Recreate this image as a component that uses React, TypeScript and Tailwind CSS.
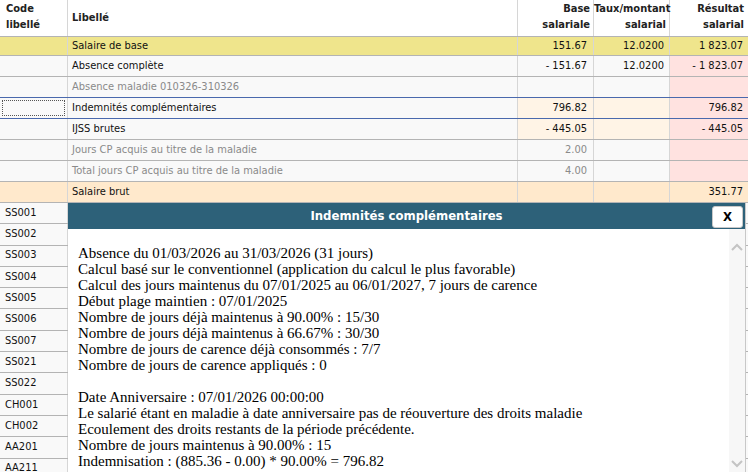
import React from "react";

type Row = {
  label: string;
  base?: string;
  taux?: string;
  result?: string;
  muted?: boolean;
  rowBg?: string;
  baseBg?: string;
  tauxBg?: string;
  resultBg?: string;
  focus?: boolean;
};

const rows: Row[] = [
  { label: "Salaire de base", base: "151.67", taux: "12.0200", result: "1 823.07", rowBg: "bg-[#efe58c]" },
  { label: "Absence complète", base: "- 151.67", taux: "12.0200", result: "- 1 823.07", resultBg: "bg-[#ffe2e0]" },
  { label: "Absence maladie 010326-310326", muted: true, resultBg: "bg-[#ffe2e0]" },
  {
    label: "Indemnités complémentaires",
    base: "796.82",
    result: "796.82",
    baseBg: "bg-[#fff4e6]",
    tauxBg: "bg-[#fff4e6]",
    resultBg: "bg-[#ffe2e0]",
    focus: true,
  },
  {
    label: "IJSS brutes",
    base: "- 445.05",
    result: "- 445.05",
    baseBg: "bg-[#fff4e6]",
    tauxBg: "bg-[#fff4e6]",
    resultBg: "bg-[#ffe2e0]",
  },
  { label: "Jours CP acquis au titre de la maladie", base: "2.00", muted: true, resultBg: "bg-[#ffe2e0]" },
  { label: "Total jours CP acquis au titre de la maladie", base: "4.00", muted: true, resultBg: "bg-[#ffe2e0]" },
  { label: "Salaire brut", result: "351.77", rowBg: "bg-[#ffe9cc]" },
];

const codes = ["SS001", "SS002", "SS003", "SS004", "SS005", "SS006", "SS007", "SS021", "SS022", "CH001", "CH002", "AA201", "AA211"];

const detail = [
  "Absence du 01/03/2026 au 31/03/2026 (31 jours)",
  "Calcul basé sur le conventionnel (application du calcul le plus favorable)",
  "Calcul des jours maintenus du 07/01/2025 au 06/01/2027, 7 jours de carence",
  "Début plage maintien : 07/01/2025",
  "Nombre de jours déjà maintenus à 90.00% : 15/30",
  "Nombre de jours déjà maintenus à 66.67% : 30/30",
  "Nombre de jours de carence déjà consommés : 7/7",
  "Nombre de jours de carence appliqués : 0",
  "",
  "Date Anniversaire : 07/01/2026 00:00:00",
  "Le salarié étant en maladie à date anniversaire pas de réouverture des droits maladie",
  "Ecoulement des droits restants de la période précédente.",
  "Nombre de jours maintenus à 90.00% : 15",
  "Indemnisation : (885.36 - 0.00) * 90.00% = 796.82",
];

const grid = "grid grid-cols-[68px_450px_76px_76px_78px]";

export default function App() {
  return (
    <div
      className="relative w-[748px] h-[472px] overflow-hidden bg-white text-[11px] text-[#111]"
      style={{ fontFamily: "Tahoma, 'DejaVu Sans Condensed', 'Liberation Sans', sans-serif" }}
    >
      {/* header */}
      <div className={`${grid} h-[37px] border-b border-[#b4b4b4] font-bold text-[#222] leading-[16px]`}>
        <div className="border-r border-[#d6d6d6] px-[6px] pt-[1px]">
          Code
          <br />
          libellé
        </div>
        <div className="flex items-center border-r border-[#d6d6d6] px-[4px]">Libellé</div>
        <div className="border-r border-[#d6d6d6] pr-[3px] pt-[1px] text-right">
          Base
          <br />
          salariale
        </div>
        <div className="border-r border-[#d6d6d6] pr-[3px] pt-[1px] text-right whitespace-nowrap">
          Taux/montant
          <br />
          salarial
        </div>
        <div className="pr-[4px] pt-[1px] text-right">
          Résultat
          <br />
          salarial
        </div>
      </div>

      {rows.map((r, i) => (
        <div
          key={r.label}
          className={`${grid} ${i === 0 ? "h-[19px]" : "h-[21px]"} border-b ${
            r.focus ? "border-[#4a69ad]" : i === 2 ? "border-[#4a69ad]" : "border-[#b4b4b4]"
          } ${r.rowBg ?? "bg-[#f9f9f9]"} ${r.muted ? "text-[#8a8a8a]" : ""}`}
        >
          <div className="border-r border-[#d6d6d6] p-[2px]">
            {r.focus && <div className="h-full border border-dotted border-[#555]" />}
          </div>
          <div className="flex items-center border-r border-[#d6d6d6] px-[4px]">{r.label}</div>
          <div className={`flex items-center justify-end border-r border-[#d6d6d6] pr-[6px] ${r.baseBg ?? ""}`}>
            {r.base}
          </div>
          <div className={`flex items-center justify-end border-r border-[#d6d6d6] pr-[5px] ${r.tauxBg ?? ""}`}>
            {r.taux}
          </div>
          <div className={`flex items-center justify-end pr-[5px] ${r.resultBg ?? ""}`}>{r.result}</div>
        </div>
      ))}

      {codes.map((c) => (
        <div key={c} className={`${grid} h-[21.3px] border-b border-[#b4b4b4] bg-[#f9f9f9]`}>
          <div className="flex items-center border-r border-[#d6d6d6] px-[5px]">{c}</div>
          <div />
          <div />
          <div />
          <div />
        </div>
      ))}

      {/* dialog */}
      <div className="absolute left-[68px] top-[203px] right-[2px] bottom-[-10px] flex flex-col border-r border-[#c8c8c8] bg-white">
        <div className="relative flex h-[26px] items-center justify-center bg-[#2d6179] text-[13px] font-bold text-white">
          Indemnités complémentaires
          <button className="absolute right-[2px] top-[3px] flex h-[22px] w-[31px] items-center justify-center rounded-[3px] border border-[#c8c8c8] bg-white text-[13px] font-bold text-black">
            X
          </button>
        </div>
        <div className="flex flex-1">
          <div
            className="flex-1 pl-[10px] pt-[16px] text-[15px] leading-[16px] text-black"
            style={{ fontFamily: "'Liberation Serif', 'Times New Roman', serif" }}
          >
            {detail.map((l, i) => (
              <div key={i} className="h-[16px] whitespace-nowrap">
                {l}
              </div>
            ))}
          </div>
          <div className="flex w-[16px] flex-col justify-between bg-[#f7f7f7] pb-[14px] pt-[14px]">
            <svg width="16" height="10" viewBox="0 0 16 10" className="text-[#c4c4c4]">
              <path d="M3 7l5-5 5 5" fill="none" stroke="currentColor" strokeWidth="2" />
            </svg>
            <svg width="16" height="10" viewBox="0 0 16 10" className="text-[#c4c4c4]">
              <path d="M3 3l5 5 5-5" fill="none" stroke="currentColor" strokeWidth="2" />
            </svg>
          </div>
        </div>
      </div>
    </div>
  );
}
